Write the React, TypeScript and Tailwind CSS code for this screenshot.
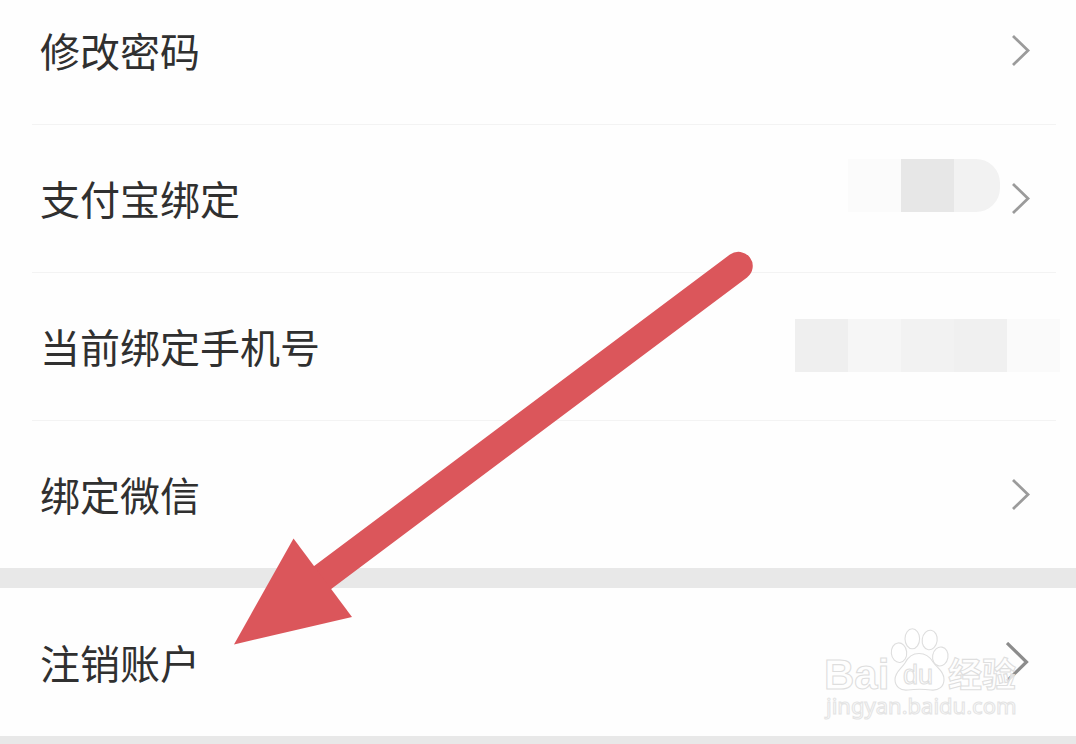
import React from 'react';

interface SettingRowProps {
  label: string;
  href?: string;
  largeArrow?: boolean;
  divider?: boolean;
  children?: React.ReactNode;
}

const Chevron: React.FC<{ large?: boolean }> = ({ large }) => {
  if (large) {
    return (
      <svg className="mr-0.5 h-10 w-6 shrink-0" viewBox="0 0 24 40" fill="none" stroke="#8c8c8c" strokeWidth="3.2" aria-hidden="true">
        <path d="M1 1 L20.5 20 L1 39" />
      </svg>
    );
  }

  return (
    <svg className="h-8 w-5 shrink-0" viewBox="0 0 20 32" fill="none" stroke="#9b9b9b" strokeWidth="2.8" aria-hidden="true">
      <path d="M1 2 L16 16.500 L1 31" />
    </svg>
  );
};

const SettingRow: React.FC<SettingRowProps> = ({ label, href, largeArrow, divider, children }) => {
  const content = (
    <>
      <span>{label}</span>
      <span className="flex items-center gap-3">
        {children}
        {href && <Chevron large={largeArrow} />}
      </span>
    </>
  );
  const rowClass = 'flex h-[147px] items-center justify-between pb-0.5 pl-2 pr-6';

  return (
    <li className={divider ? 'border-t border-[#f3f3f3]' : 'border-t border-transparent'}>
      {href ? (
        <a href={href} className={rowClass}>{content}</a>
      ) : (
        <div className={rowClass}>{content}</div>
      )}
    </li>
  );
};

const BaiduWatermark = () => (
  <svg
    className="pointer-events-none absolute bottom-3 right-[50px] h-24 w-[204px]"
    viewBox="0 0 204 96"
    fill="#ffffff"
    fillOpacity="0.75"
    stroke="#dedede"
    strokeWidth="1.1"
    fontFamily="'Liberation Sans', sans-serif"
    role="img"
    aria-label="Baidu 经验"
  >
    <text x="2" y="61" fontSize="42" fontWeight="700">Bai</text>
    <ellipse cx="77" cy="24.7" rx="7.7" ry="9.8" transform="rotate(-6 77 24.7)" />
    <ellipse cx="90.3" cy="10.800" rx="7.300" ry="10" />
    <ellipse cx="107.700" cy="12" rx="7.500" ry="9.800" transform="rotate(8 107.700 12)" />
    <ellipse cx="118.300" cy="28.500" rx="7.700" ry="9.500" transform="rotate(10 118.300 28.500)" />
    <path d="M97 25.500 C104 25.500 108 29 111 34 C115 40 122 43 122 51.500 C122 59 116 63 109 62 C101 61 94 61 86 62 C78 63 73 58 73 51.500 C73 44 79 41 83 35 C86 29 90 25.500 97 25.500 Z" />
    <text x="81" y="56" fontSize="27">du</text>
    <text x="126" y="59" fontSize="34" fontWeight="700" fontFamily="'Noto Sans CJK SC', sans-serif">经验</text>
    <text x="4" y="86" fontSize="22" stroke="#e4e4e4" fontFamily="'Noto Sans', sans-serif">jingyan.baidu.com</text>
  </svg>
);

const PointerArrow = () => (
  <svg
    className="pointer-events-none absolute left-[234px] top-[251px] h-[394px] w-[520px]"
    viewBox="0 0 520 394"
    fill="#db565b"
    aria-hidden="true"
  >
    <path d="M504.500 15 L80 333" stroke="#db565b" strokeWidth="28.500" strokeLinecap="round" />
    <path d="M0 393.500 L59.500 287.500 L118 366 Z" />
  </svg>
);

export default function App() {
  return (
    <main
      className="relative flex min-h-screen flex-col gap-5 overflow-hidden bg-[#e8e8e8] text-[40px] leading-none text-[#303030]"
      style={{ fontFamily: "'Noto Sans CJK SC', sans-serif" }}
    >
      {/* list is scrolled slightly past its top edge */}
      <ul className="-mt-6 bg-[#fefefe] pl-8 pr-5">
        <SettingRow label="修改密码" href="#password" />
        <SettingRow label="支付宝绑定" href="#alipay" divider>
          <span className="mb-6 flex h-[53px] overflow-hidden rounded-r-3xl">
            <span className="w-[53px] bg-[#fbfbfb]" />
            <span className="w-[53px] bg-[#e7e7e7]" />
            <span className="w-[46px] bg-[#f2f2f2]" />
          </span>
        </SettingRow>
        <SettingRow label="当前绑定手机号" divider>
          <span className="-mr-7 flex h-[53px]">
            <span className="w-[53px] bg-[#efefef]" />
            <span className="w-[53px] bg-[#f6f6f6]" />
            <span className="w-[53px] bg-[#f2f2f2]" />
            <span className="w-[53px] bg-[#f0f0f0]" />
            <span className="w-[53px] bg-[#fafafa]" />
          </span>
        </SettingRow>
        <SettingRow label="绑定微信" href="#wechat" divider />
      </ul>

      <ul className="relative bg-[#fefefe] pl-8 pr-5">
        <SettingRow label="注销账户" href="#close-account" largeArrow />
        <li>
          <BaiduWatermark />
        </li>
      </ul>

      <PointerArrow />
    </main>
  );
}
